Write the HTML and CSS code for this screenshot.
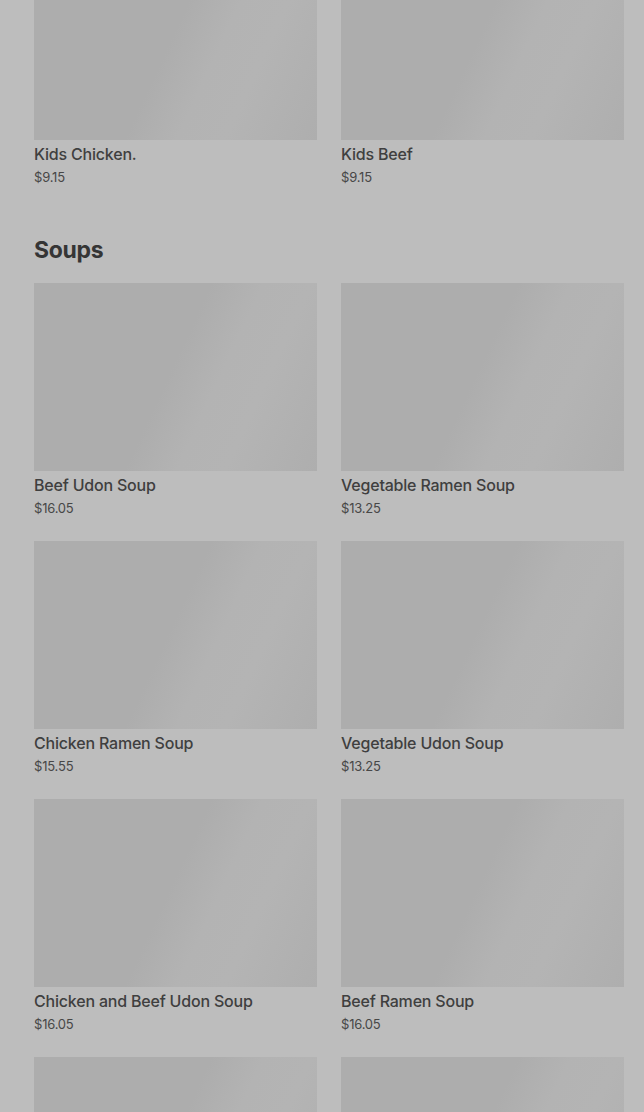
FILE: index.html
```html
<!DOCTYPE html>
<html lang="en">
<head>
<meta charset="UTF-8">
<meta name="viewport" content="width=device-width, initial-scale=1.0">
<title>Menu</title>
<link rel="stylesheet" href="styles.css">
</head>
<body>
<div class="menu">

<div class="grid first">
<div class="item"><div class="pic"></div><div class="name">Kids Chicken.</div><div class="price">$9.15</div></div>
<div class="item"><div class="pic"></div><div class="name">Kids Beef</div><div class="price">$9.15</div></div>
</div>

<h2 class="section">Soups</h2>
<div class="grid">
<div class="item"><div class="pic"></div><div class="name">Beef Udon Soup</div><div class="price">$16.05</div></div>
<div class="item"><div class="pic"></div><div class="name">Vegetable Ramen Soup</div><div class="price">$13.25</div></div>
<div class="item"><div class="pic"></div><div class="name">Chicken Ramen Soup</div><div class="price">$15.55</div></div>
<div class="item"><div class="pic"></div><div class="name">Vegetable Udon Soup</div><div class="price">$13.25</div></div>
<div class="item"><div class="pic"></div><div class="name">Chicken and Beef Udon Soup</div><div class="price">$16.05</div></div>
<div class="item"><div class="pic"></div><div class="name">Beef Ramen Soup</div><div class="price">$16.05</div></div>
<div class="item"><div class="pic"></div></div>
<div class="item"><div class="pic"></div></div>
</div>

</div>
</body>
</html>
```

FILE: styles.css
```css
body{margin:0;background:#bdbdbd;color:#3e3e3e;font-family:Inter,"Liberation Sans",sans-serif;overflow:hidden}
.menu{padding:0 20px 0 34px;margin-top:-48px}
.grid{display:grid;grid-template-columns:1fr 1fr;column-gap:24px;row-gap:22px}
.item{display:flex;flex-direction:column}
.pic{height:188px;background:linear-gradient(115deg,#adadad 0%,#adadad 48%,#b3b3b3 62%,#b4b4b4 75%,#aeaeae 100%)}
.name{font-size:16px;font-weight:500;line-height:24px;margin-top:2px;color:#3f3f3f;letter-spacing:-0.2px}
.price{font-size:13px;line-height:22px;color:#474747;letter-spacing:-0.2px}
.section{margin:46px 0 17px;font-size:23px;font-weight:700;line-height:32px;color:#353535;letter-spacing:-0.3px}
```
